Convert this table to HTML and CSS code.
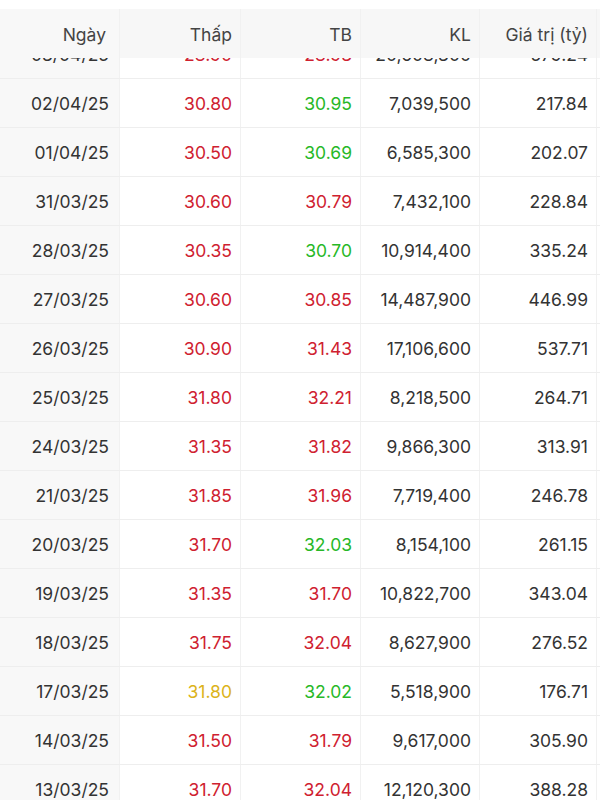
FILE: index.html
```html
<!DOCTYPE html>
<html lang="vi">
<head>
<meta charset="utf-8">
<link rel="stylesheet" href="styles.css">
</head>
<body>
<div class="table">
  <div class="row head">
    <div class="cell first">Ngày</div>
    <div class="cell">Thấp</div>
    <div class="cell">TB</div>
    <div class="cell">KL</div>
    <div class="cell">Giá trị (tỷ)</div>
  </div>
  <div class="body">
    <div class="row"><div class="cell first">03/04/25</div><div class="cell red">28.90</div><div class="cell red">28.93</div><div class="cell">20,608,300</div><div class="cell">579.24</div></div>
    <div class="row"><div class="cell first">02/04/25</div><div class="cell red">30.80</div><div class="cell green">30.95</div><div class="cell">7,039,500</div><div class="cell">217.84</div></div>
    <div class="row"><div class="cell first">01/04/25</div><div class="cell red">30.50</div><div class="cell green">30.69</div><div class="cell">6,585,300</div><div class="cell">202.07</div></div>
    <div class="row"><div class="cell first">31/03/25</div><div class="cell red">30.60</div><div class="cell red">30.79</div><div class="cell">7,432,100</div><div class="cell">228.84</div></div>
    <div class="row"><div class="cell first">28/03/25</div><div class="cell red">30.35</div><div class="cell green">30.70</div><div class="cell">10,914,400</div><div class="cell">335.24</div></div>
    <div class="row"><div class="cell first">27/03/25</div><div class="cell red">30.60</div><div class="cell red">30.85</div><div class="cell">14,487,900</div><div class="cell">446.99</div></div>
    <div class="row"><div class="cell first">26/03/25</div><div class="cell red">30.90</div><div class="cell red">31.43</div><div class="cell">17,106,600</div><div class="cell">537.71</div></div>
    <div class="row"><div class="cell first">25/03/25</div><div class="cell red">31.80</div><div class="cell red">32.21</div><div class="cell">8,218,500</div><div class="cell">264.71</div></div>
    <div class="row"><div class="cell first">24/03/25</div><div class="cell red">31.35</div><div class="cell red">31.82</div><div class="cell">9,866,300</div><div class="cell">313.91</div></div>
    <div class="row"><div class="cell first">21/03/25</div><div class="cell red">31.85</div><div class="cell red">31.96</div><div class="cell">7,719,400</div><div class="cell">246.78</div></div>
    <div class="row"><div class="cell first">20/03/25</div><div class="cell red">31.70</div><div class="cell green">32.03</div><div class="cell">8,154,100</div><div class="cell">261.15</div></div>
    <div class="row"><div class="cell first">19/03/25</div><div class="cell red">31.35</div><div class="cell red">31.70</div><div class="cell">10,822,700</div><div class="cell">343.04</div></div>
    <div class="row"><div class="cell first">18/03/25</div><div class="cell red">31.75</div><div class="cell red">32.04</div><div class="cell">8,627,900</div><div class="cell">276.52</div></div>
    <div class="row"><div class="cell first">17/03/25</div><div class="cell yellow">31.80</div><div class="cell green">32.02</div><div class="cell">5,518,900</div><div class="cell">176.71</div></div>
    <div class="row"><div class="cell first">14/03/25</div><div class="cell red">31.50</div><div class="cell red">31.79</div><div class="cell">9,617,000</div><div class="cell">305.90</div></div>
    <div class="row"><div class="cell first">13/03/25</div><div class="cell red">31.70</div><div class="cell red">32.04</div><div class="cell">12,120,300</div><div class="cell">388.28</div></div>
  </div>
</div>
</body>
</html>
```

FILE: styles.css
```css
html, body {
  margin: 0;
  padding: 0;
  background: #ffffff;
}
body {
  font-family: Inter, "Noto Sans", "Liberation Sans", sans-serif;
  font-size: 17.5px;
  color: #333333;
  height: 800px;
  overflow: hidden;
}
.table {
  padding-top: 9px;
  width: 600px;
}
.row {
  display: grid;
  grid-template-columns: 120px 121px 120px 119px 117px;
  height: 49px;
  box-sizing: border-box;
  border-bottom: 1px solid #eeeeee;
}
.cell {
  display: flex;
  align-items: center;
  justify-content: flex-end;
  padding-right: 8px;
  border-right: 1px solid #f1f1f1;
  white-space: nowrap;
}
.first {
  background: #f8f8f8;
  padding-right: 10px;
}
.head {
  position: relative;
  z-index: 1;
  background: #f7f7f7;
  color: #444444;
  border-bottom: none;
}
.head .cell {
  padding-top: 2px;
}
.head .first {
  padding-right: 13px;
}
.body {
  margin-top: -28px;
}
.red { color: #cf2130; }
.green { color: #27b827; }
.yellow { color: #dcb31a; }
```
